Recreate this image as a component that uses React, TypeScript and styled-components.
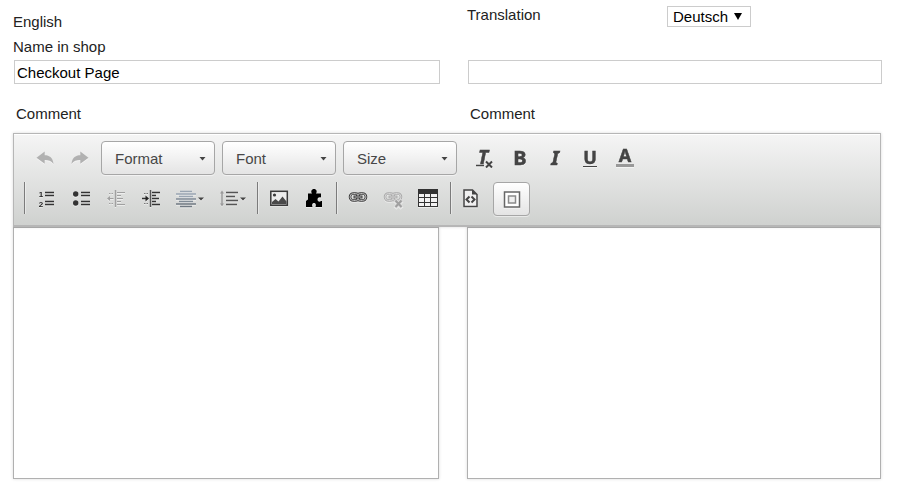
import React from "react";
import styled, { createGlobalStyle } from "styled-components";

const GlobalStyle = createGlobalStyle`
  *, *::before, *::after { box-sizing: border-box; }
  body {
    margin: 0;
    background: #fff;
    color: #222;
    font: 15px/20px "Liberation Sans", Arial, sans-serif;
  }
`;

const Page = styled.main`
  padding: 0 20px 16px 13px;
`;

const Columns = styled.div`
  display: grid;
  grid-template-columns: 426fr 414fr;
  column-gap: 28px;
`;

const Headings = styled(Columns)`
  height: 60px;
`;

const SourceHeading = styled.div`
  display: flex;
  flex-direction: column;
  gap: 5px;
  padding-top: 12px;
`;

const TargetHeading = styled.div`
  display: grid;
  grid-template-columns: 200px auto;
  justify-content: start;
  align-items: start;
  padding-top: 5px;
`;

const LanguageBox = styled.span`
  position: relative;
  display: block;
  margin-top: 1px;
`;

const LanguageSelect = styled.select`
  appearance: none;
  display: block;
  width: 84px;
  height: 21px;
  padding: 0 20px 0 5px;
  border: 1px solid #ccc;
  border-radius: 0;
  background: #fff;
  color: #000;
  font: 15px "Liberation Sans", Arial, sans-serif;
`;

const SelectArrow = styled.svg`
  position: absolute;
  right: 9px;
  top: 0;
  height: 100%;
  pointer-events: none;
`;

const NameFields = styled(Columns)`
  margin: 0 -1px 0 1px;
`;

const TextField = styled.input`
  width: 100%;
  height: 24px;
  padding: 0 2px;
  border: 1px solid #ccc;
  background: #fff;
  color: #000;
  font: 15px "Liberation Sans", Arial, sans-serif;
`;

const CommentLabels = styled(Columns)`
  padding: 20px 0 9px;
`;

const CommentLabel = styled.label`
  padding-left: 3px;
`;

const Toolbar = styled.div`
  position: relative;
  display: flex;
  flex-direction: column;
  gap: 7px;
  padding: 7px 10px 9px;
  border: 1px solid #b6b6b6;
  border-bottom-width: 2px;
  background: linear-gradient(#f5f5f5, #cfd1cf);
  box-shadow: 0 0 3px rgba(0, 0, 0, 0.15), inset 0 1px 0 #fff;
`;

const ToolRow = styled.div`
  display: flex;
`;

const Group = styled.div<{ $gap?: number; $left?: number }>`
  display: flex;
  gap: ${(p) => p.$gap ?? 0}px;
  margin-left: ${(p) => p.$left ?? 0}px;
`;

const Separator = styled.span`
  width: 1px;
  height: 32px;
  margin: 0 4px;
  background: #7b7b7b;
  box-shadow: 1px 0 0 rgba(255, 255, 255, 0.4);

  &:first-child { margin-left: 0; }
`;

const ToolButton = styled.button<{ $wide?: boolean; $pressed?: boolean }>`
  display: flex;
  align-items: center;
  justify-content: center;
  width: ${(p) => (p.$wide ? 42 : p.$pressed ? 37 : 35)}px;
  height: 34px;
  margin: 0 0 0 ${(p) => (p.$pressed ? 3 : 0)}px;
  padding: 0;
  border: ${(p) => (p.$pressed ? "1px solid #a6a6a6" : "0")};
  border-radius: 4px;
  background: ${(p) => (p.$pressed ? "linear-gradient(#fff, #e4e4e4)" : "transparent")};
  box-shadow: ${(p) => (p.$pressed ? "0 1px 0 rgba(255, 255, 255, 0.5)" : "none")};
  color: #444;
`;

const Combo = styled.span`
  position: relative;
  display: block;
`;

const ComboSelect = styled.select`
  appearance: none;
  display: block;
  width: 114px;
  height: 34px;
  padding: 0 24px 0 13px;
  border: 1px solid #a6a6a6;
  border-radius: 4px;
  background: linear-gradient(#fff, #e4e4e4);
  box-shadow: 0 1px 0 rgba(255, 255, 255, 0.5), inset 0 0 2px rgba(255, 255, 255, 0.15);
  color: #474747;
  font: 15px "Liberation Sans", Arial, sans-serif;
`;

const Editor = styled.textarea`
  display: block;
  width: 100%;
  height: 252px;
  padding: 8px;
  resize: none;
  border: 1px solid #b0b0b0;
  background: #fff;
  box-shadow: 0 0 3px rgba(0, 0, 0, 0.15);
  font: 15px "Liberation Sans", Arial, sans-serif;
`;

const Drawing = styled.svg`
  display: block;
  overflow: visible;
  filter: drop-shadow(0 1px 0 rgba(255, 255, 255, 0.5));
`;

const Letter = styled.text`
  font-family: "Noto Sans", "Open Sans", sans-serif;
  font-weight: 700;
  text-anchor: middle;
  fill: #444;
  stroke: #444;
  stroke-width: 0.5px;
`;

const Digit = styled.text`
  font: 700 8px "Liberation Sans", Arial, sans-serif;
  text-anchor: middle;
  fill: #222;
`;

type IconProps = { width?: number; children: React.ReactNode };

const Icon = ({ width = 21, children }: IconProps) => (
  <Drawing width={width} height="22" viewBox={`0 0 ${width} 22`} fill="none" aria-hidden="true">
    {children}
  </Drawing>
);

const Caret = () => <path d="M23 9.5h6l-3 3z" fill="#444" />;

const arrowPath = "M1.5 10.7 9.7 4.5v3.7c4.8 0 8.3 2.5 8.8 8.9-2.2-3.2-5-4-8.8-4v3.7z";

const UndoIcon = () => <Icon><path d={arrowPath} fill="#b1b1b1" /></Icon>;
const RedoIcon = () => (
  <Icon><path d={arrowPath} transform="translate(20 0) scale(-1 1)" fill="#b1b1b1" /></Icon>
);

const ClearFormatIcon = () => (
  <Icon>
    <Letter x="9" y="17" fontSize="19" fontStyle="italic">T</Letter>
    <path d="M2 18.5h8" stroke="#444" strokeWidth="1.5" />
    <path d="m12 14.500 6 6m0-6-6 6" stroke="#444" strokeWidth="2" />
  </Icon>
);
const BoldIcon = () => <Icon><Letter x="11" y="18" fontSize="20">B</Letter></Icon>;
const ItalicIcon = () => <Icon><Letter x="11" y="18" fontSize="20" fontStyle="italic">I</Letter></Icon>;
const UnderlineIcon = () => (
  <Icon>
    <Letter x="11" y="17" fontSize="18">U</Letter>
    <path d="M4 19.5h14" stroke="#444" strokeWidth="1" />
  </Icon>
);
const ColorIcon = () => (
  <Icon>
    <Letter x="11" y="15" fontSize="18">A</Letter>
    <path d="M2 18.5h18" stroke="#999" strokeWidth="3" />
  </Icon>
);

const NumberedIcon = () => (
  <Icon>
    <Digit x="5" y="9">1</Digit>
    <Digit x="5" y="19">2</Digit>
    <path d="M9 4.5h9M9 7.5h9M9 13.5h9M9 16.5h9" stroke="#333" strokeWidth="1.5" />
  </Icon>
);
const BulletedIcon = () => (
  <Icon>
    <circle cx="4.7" cy="6" r="2.7" fill="#333" />
    <circle cx="4.7" cy="15" r="2.7" fill="#333" />
    <path d="M10 4.5h9M10 7.5h9M10 13.5h9M10 16.5h9" stroke="#333" strokeWidth="1.5" />
  </Icon>
);
const OutdentIcon = () => (
  <Icon>
    <path d="M9.5 2v17" stroke="#a0a0a0" strokeWidth="1.5" />
    <path d="M2 10.5h5.500M3 5.5h1.500m1 0H7M3 15.5h1.500m1 0H7M11 4.5h8M11 7.5h4M11 10.5h6M11 13.5h4M11 16.5h8" stroke="#a0a0a0" strokeWidth="1.2" />
    <path d="M1 10.5 4 8v5z" fill="#a0a0a0" />
  </Icon>
);
const IndentIcon = () => (
  <Icon>
    <path d="M9.5 2v17" stroke="#555" strokeWidth="1.5" />
    <path d="M3 5.5h1.500m1 0H7M3 15.5h1.500m1 0H7" stroke="#777" />
    <path d="M1 10.5h4M11 4.5h8M11 7.5h4M11 10.5h7M11 13.5h4M11 16.5h8" stroke="#333" strokeWidth="1.5" />
    <path d="M8 10.5 4.5 7.5v6z" fill="#222" />
  </Icon>
);
const AlignIcon = () => (
  <Icon width={30}>
    <path d="M5 3.5h12M1 6h20M4 8.500h14" stroke="#99a5b2" strokeWidth="1.5" />
    <path d="M1 11h20M4 13.500h14" stroke="#808b96" strokeWidth="1.5" />
    <path d="M1 16h20M5 18.500h12" stroke="#707982" strokeWidth="1.5" />
    <Caret />
  </Icon>
);
const LineHeightIcon = () => (
  <Icon width={30}>
    <path d="M5 4v13" stroke="#999" strokeWidth="1.5" />
    <path d="m3 5.5 2-3 2 3zM3 15.5l2 3 2-3z" fill="#999" />
    <path d="M9 4.5h12M9 8.5h9M9 12.5h12M9 16.5h11" stroke="#555" strokeWidth="1.5" />
    <Caret />
  </Icon>
);
const ImageIcon = () => (
  <Icon>
    <rect x="1.8" y="3.3" width="16.5" height="14" fill="#ededed" stroke="#3a3a3a" strokeWidth="1.5" />
    <circle cx="5.5" cy="7" r="1.6" fill="#3a3a3a" />
    <path d="m3 16.3v-2.3l3.5-3 3 2.5 4-5 4 5v2.8z" fill="#4a4a4a" />
  </Icon>
);
const PuzzleIcon = () => (
  <Icon>
    <path d="M4 5.5h4C6.500 3.500 7.500 1 10 1s3.500 2.500 2 4.500h5v4c-1.500-.8-3.500 0-3.500 2s2 2.800 3.500 1.500h1v6h-6.500c1-2 .2-4-1.500-4s-2.500 2-1.500 4H2v-6l2-1.500z" fill="#000" />
  </Icon>
);

const Chain = ({ dark, light }: { dark: string; light: string }) => (
  <>
    <rect x="2" y="5.5" width="9" height="7" rx="3.5" stroke={dark} strokeWidth="2.6" />
    <rect x="9" y="5.5" width="9" height="7" rx="3.5" stroke={dark} strokeWidth="2.6" />
    <rect x="2" y="5.5" width="9" height="7" rx="3.5" stroke={light} strokeWidth="1" />
    <rect x="9" y="5.5" width="9" height="7" rx="3.5" stroke={light} strokeWidth="1" />
    <path d="M5.500 9h9" stroke={dark} strokeWidth="3" />
    <path d="M6.500 9h7" stroke={light} strokeWidth="1" />
  </>
);

const LinkIcon = () => <Icon><Chain dark="#3c3c3c" light="#bbb" /></Icon>;
const UnlinkIcon = () => (
  <Icon>
    <Chain dark="#aaa" light="#d5d5d5" />
    <path d="m12 12 7 7.5m0-7.5-7 7.5" stroke="#dcdcdc" strokeWidth="4" />
    <path d="m12.5 12.5 6 6.5m0-6.5-6 6.5" stroke="#a0a0a0" strokeWidth="2" />
  </Icon>
);
const TableIcon = () => (
  <Icon>
    <path d="M0 1h20v18H0z" fill="#333" />
    <path d="M1 6h5v3H1zM7 6h5v3H7zM13 6h6v3h-6zM1 10h5v4H1zM7 10h5v4H7zM13 10h6v4h-6zM1 15h5v3H1zM7 15h5v3H7zM13 15h6v3h-6z" fill="#f2f2f2" />
  </Icon>
);
const SourceIcon = () => (
  <Icon>
    <path d="M2 2h8.5L15 6.5v12H2z" fill="#f0f0f0" stroke="#444" strokeWidth="1.5" />
    <path d="M10 2v4.500h5z" fill="#444" />
    <path d="m7.500 8.500-3 3 3 3M9.500 8.500l3 3-3 3" stroke="#444" strokeWidth="2" />
  </Icon>
);
const BlocksIcon = () => (
  <Icon>
    <path d="M3.5 4h15v15h-15z" fill="#fff" stroke="#666" strokeWidth="1.5" />
    <path d="M7.5 8h7v7h-7z" fill="#f0f0f0" stroke="#8a8a8a" strokeWidth="1.5" />
  </Icon>
);

const Tool = ({ label, wide, pressed, children }: {
  label: string; wide?: boolean; pressed?: boolean; children: React.ReactNode;
}) => (
  <ToolButton type="button" aria-label={label} aria-pressed={pressed} $wide={wide} $pressed={pressed}>
    {children}
  </ToolButton>
);

const Dropdown = ({ label }: { label: string }) => (
  <Combo>
    <ComboSelect aria-label={label}><option>{label}</option></ComboSelect>
    <SelectArrow width="7" viewBox="0 0 7 34" aria-hidden="true">
      <path d="M.5 16h6l-3 3.5z" fill="#444" />
    </SelectArrow>
  </Combo>
);

export default function App() {
  return (
    <>
      <GlobalStyle />
      <Page>
        <Headings>
          <SourceHeading>
            <span>English</span>
            <label htmlFor="shop-name">Name in shop</label>
          </SourceHeading>
          <TargetHeading>
            <label htmlFor="language">Translation</label>
            <LanguageBox>
              <LanguageSelect id="language"><option>Deutsch</option></LanguageSelect>
              <SelectArrow width="8" viewBox="0 0 8 21" aria-hidden="true">
                <path d="M0 7h8l-4 7z" fill="#000" />
              </SelectArrow>
            </LanguageBox>
          </TargetHeading>
        </Headings>

        <NameFields>
          <TextField id="shop-name" type="text" defaultValue="Checkout Page" />
          <TextField type="text" aria-label="Translated name in shop" />
        </NameFields>

        <CommentLabels>
          <CommentLabel htmlFor="comment">Comment</CommentLabel>
          <CommentLabel htmlFor="comment-translation">Comment</CommentLabel>
        </CommentLabels>

        <Toolbar role="toolbar" aria-label="Editor">
          <ToolRow>
            <Group $left={4}>
              <Tool label="Undo"><UndoIcon /></Tool>
              <Tool label="Redo"><RedoIcon /></Tool>
            </Group>
            <Group $gap={7} $left={3}>
              <Dropdown label="Format" />
              <Dropdown label="Font" />
              <Dropdown label="Size" />
            </Group>
            <Group $left={10}>
              <Tool label="Remove format"><ClearFormatIcon /></Tool>
              <Tool label="Bold"><BoldIcon /></Tool>
              <Tool label="Italic"><ItalicIcon /></Tool>
              <Tool label="Underline"><UnderlineIcon /></Tool>
              <Tool label="Text color"><ColorIcon /></Tool>
            </Group>
          </ToolRow>
          <ToolRow>
            <Separator />
            <Tool label="Numbered list"><NumberedIcon /></Tool>
            <Tool label="Bulleted list"><BulletedIcon /></Tool>
            <Tool label="Decrease indent"><OutdentIcon /></Tool>
            <Tool label="Increase indent"><IndentIcon /></Tool>
            <Tool label="Alignment" wide><AlignIcon /></Tool>
            <Tool label="Line height" wide><LineHeightIcon /></Tool>
            <Separator />
            <Tool label="Image"><ImageIcon /></Tool>
            <Tool label="Widget"><PuzzleIcon /></Tool>
            <Separator />
            <Tool label="Link"><LinkIcon /></Tool>
            <Tool label="Unlink"><UnlinkIcon /></Tool>
            <Tool label="Table"><TableIcon /></Tool>
            <Separator />
            <Tool label="Source"><SourceIcon /></Tool>
            <Tool label="Show blocks" pressed><BlocksIcon /></Tool>
          </ToolRow>
        </Toolbar>

        <Columns>
          <Editor id="comment" />
          <Editor id="comment-translation" />
        </Columns>
      </Page>
    </>
  );
}
